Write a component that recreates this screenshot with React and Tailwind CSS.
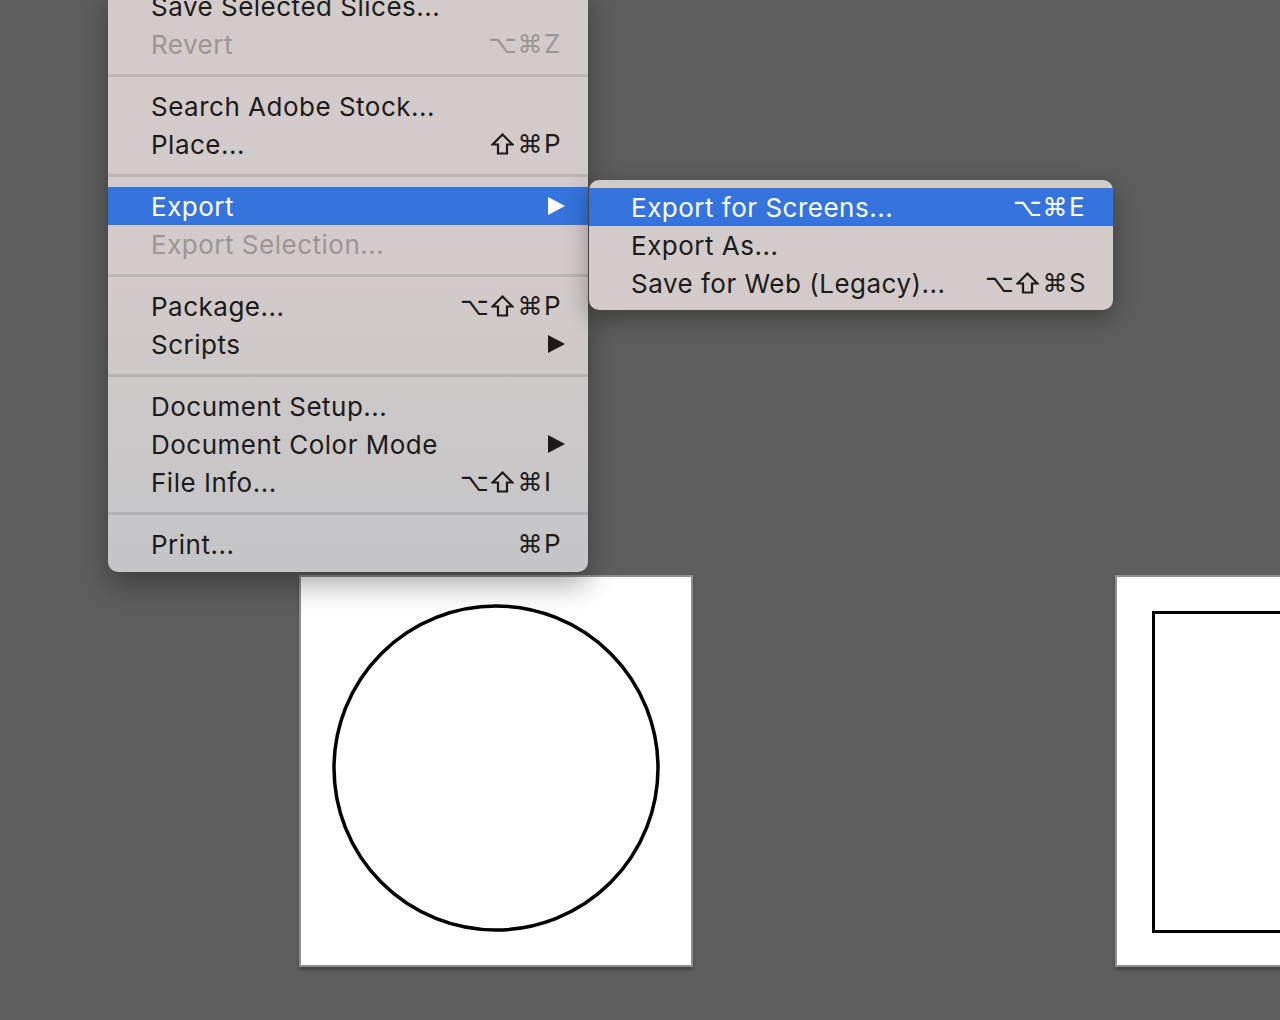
import React from "react";

const MENU = [
  { label: "Save Selected Slices..." },
  { label: "Revert", disabled: true, keys: ["⌥", "⌘"], key: "Z" },
  { sep: true },
  { label: "Search Adobe Stock..." },
  { label: "Place...", keys: ["⇧", "⌘"], key: "P" },
  { sep: true },
  { label: "Export", active: true, arrow: true },
  { label: "Export Selection...", disabled: true },
  { sep: true },
  { label: "Package...", keys: ["⌥", "⇧", "⌘"], key: "P" },
  { label: "Scripts", arrow: true },
  { sep: true },
  { label: "Document Setup..." },
  { label: "Document Color Mode", arrow: true },
  { label: "File Info...", keys: ["⌥", "⇧", "⌘"], key: "I" },
  { sep: true },
  { label: "Print...", keys: ["⌘"], key: "P" },
];

const SUBMENU = [
  { label: "Export for Screens...", active: true, keys: ["⌥", "⌘"], key: "E" },
  { label: "Export As..." },
  { label: "Save for Web (Legacy)...", keys: ["⌥", "⇧", "⌘"], key: "S" },
];

function Arrow({ white }) {
  return (
    <svg width="17" height="18" viewBox="0 0 17 18" className="mr-[-1px]">
      <polygon points="0,0 17,9 0,18" fill={white ? "#ffffff" : "#1d1a19"} />
    </svg>
  );
}

// shift key symbol, drawn: the installed fonts only have a thin one
function ShiftIcon() {
  return (
    <svg width="23" height="22" viewBox="0 0 23 22" className="mx-auto">
      <polygon
        points="11.5,1.5 21.5,11.5 16,11.5 16,20.5 7,20.5 7,11.5 1.5,11.5"
        fill="none"
        stroke="currentColor"
        strokeWidth="2.2"
        strokeLinejoin="miter"
      />
    </svg>
  );
}

function Shortcut({ keys, k }) {
  return (
    <div className="flex items-center">
      {keys.map((g, i) =>
        g === "⇧" ? (
          <span key={i} className="w-[28px] flex justify-center">
            <ShiftIcon />
          </span>
        ) : (
          <span
            key={i}
            className="w-[28px] text-center font-['DejaVu_Sans',sans-serif] text-[25px] tracking-normal leading-none"
          >
            {g}
          </span>
        )
      )}
      <span className="w-[20px] text-left leading-none">{k}</span>
    </div>
  );
}

function Row({ item, padLeft }) {
  const color = item.active
    ? "bg-[#3574dc] text-white"
    : item.disabled
    ? "text-[#9b9694]"
    : "text-[#1d1a19]";
  return (
    <div className={`flex items-center h-[38px] pr-[24px] ${padLeft} ${color}`}>
      <span className="flex-1 whitespace-nowrap">{item.label}</span>
      {item.keys && <Shortcut keys={item.keys} k={item.key} />}
      {item.arrow && <Arrow white={item.active} />}
    </div>
  );
}

export default function App() {
  return (
    <div className="relative w-[1280px] h-[1020px] overflow-hidden bg-[#5e5e5e] font-['Inter',sans-serif] text-[26px] tracking-[0.5px]">
      {/* artboard 1 */}
      <div className="absolute left-[299px] top-[575px] w-[394px] h-[392px] bg-white border-2 border-[#8f8f8f] shadow-[0_3px_3px_rgba(0,0,0,0.3)]">
        <svg width="394" height="392" className="absolute left-[-2px] top-[-2px]">
          <circle cx="197" cy="193" r="162" fill="none" stroke="#000" strokeWidth="3.5" />
        </svg>
      </div>

      {/* artboard 2 */}
      <div className="absolute left-[1115px] top-[575px] w-[394px] h-[392px] bg-white border-2 border-[#8f8f8f] shadow-[0_3px_3px_rgba(0,0,0,0.3)]">
        <div className="ml-[35px] mt-[34px] w-[330px] h-[322px] border-[3.5px] border-black" />
      </div>

      {/* main menu */}
      <div className="absolute left-[108px] top-[-13px] w-[480px] pb-[9px] rounded-b-[10px] bg-linear-to-b from-[#d3cbc9] from-45% to-[#c4c5c8] shadow-[0_12px_30px_rgba(0,0,0,0.35)]">
        {MENU.map((item, i) =>
          item.sep ? (
            <div key={i} className="h-[24px] flex items-center">
              <div className="w-full h-[3px] bg-black/10" />
            </div>
          ) : (
            <Row key={i} item={item} padLeft="pl-[43px]" />
          )
        )}
      </div>

      {/* submenu */}
      <div className="absolute left-[589px] top-[180px] w-[524px] py-[8px] rounded-[10px] bg-[#d3cbc9] shadow-[0_8px_24px_rgba(0,0,0,0.35)]">
        {SUBMENU.map((item, i) => (
          <Row key={i} item={item} padLeft="pl-[42px]" />
        ))}
      </div>
    </div>
  );
}
